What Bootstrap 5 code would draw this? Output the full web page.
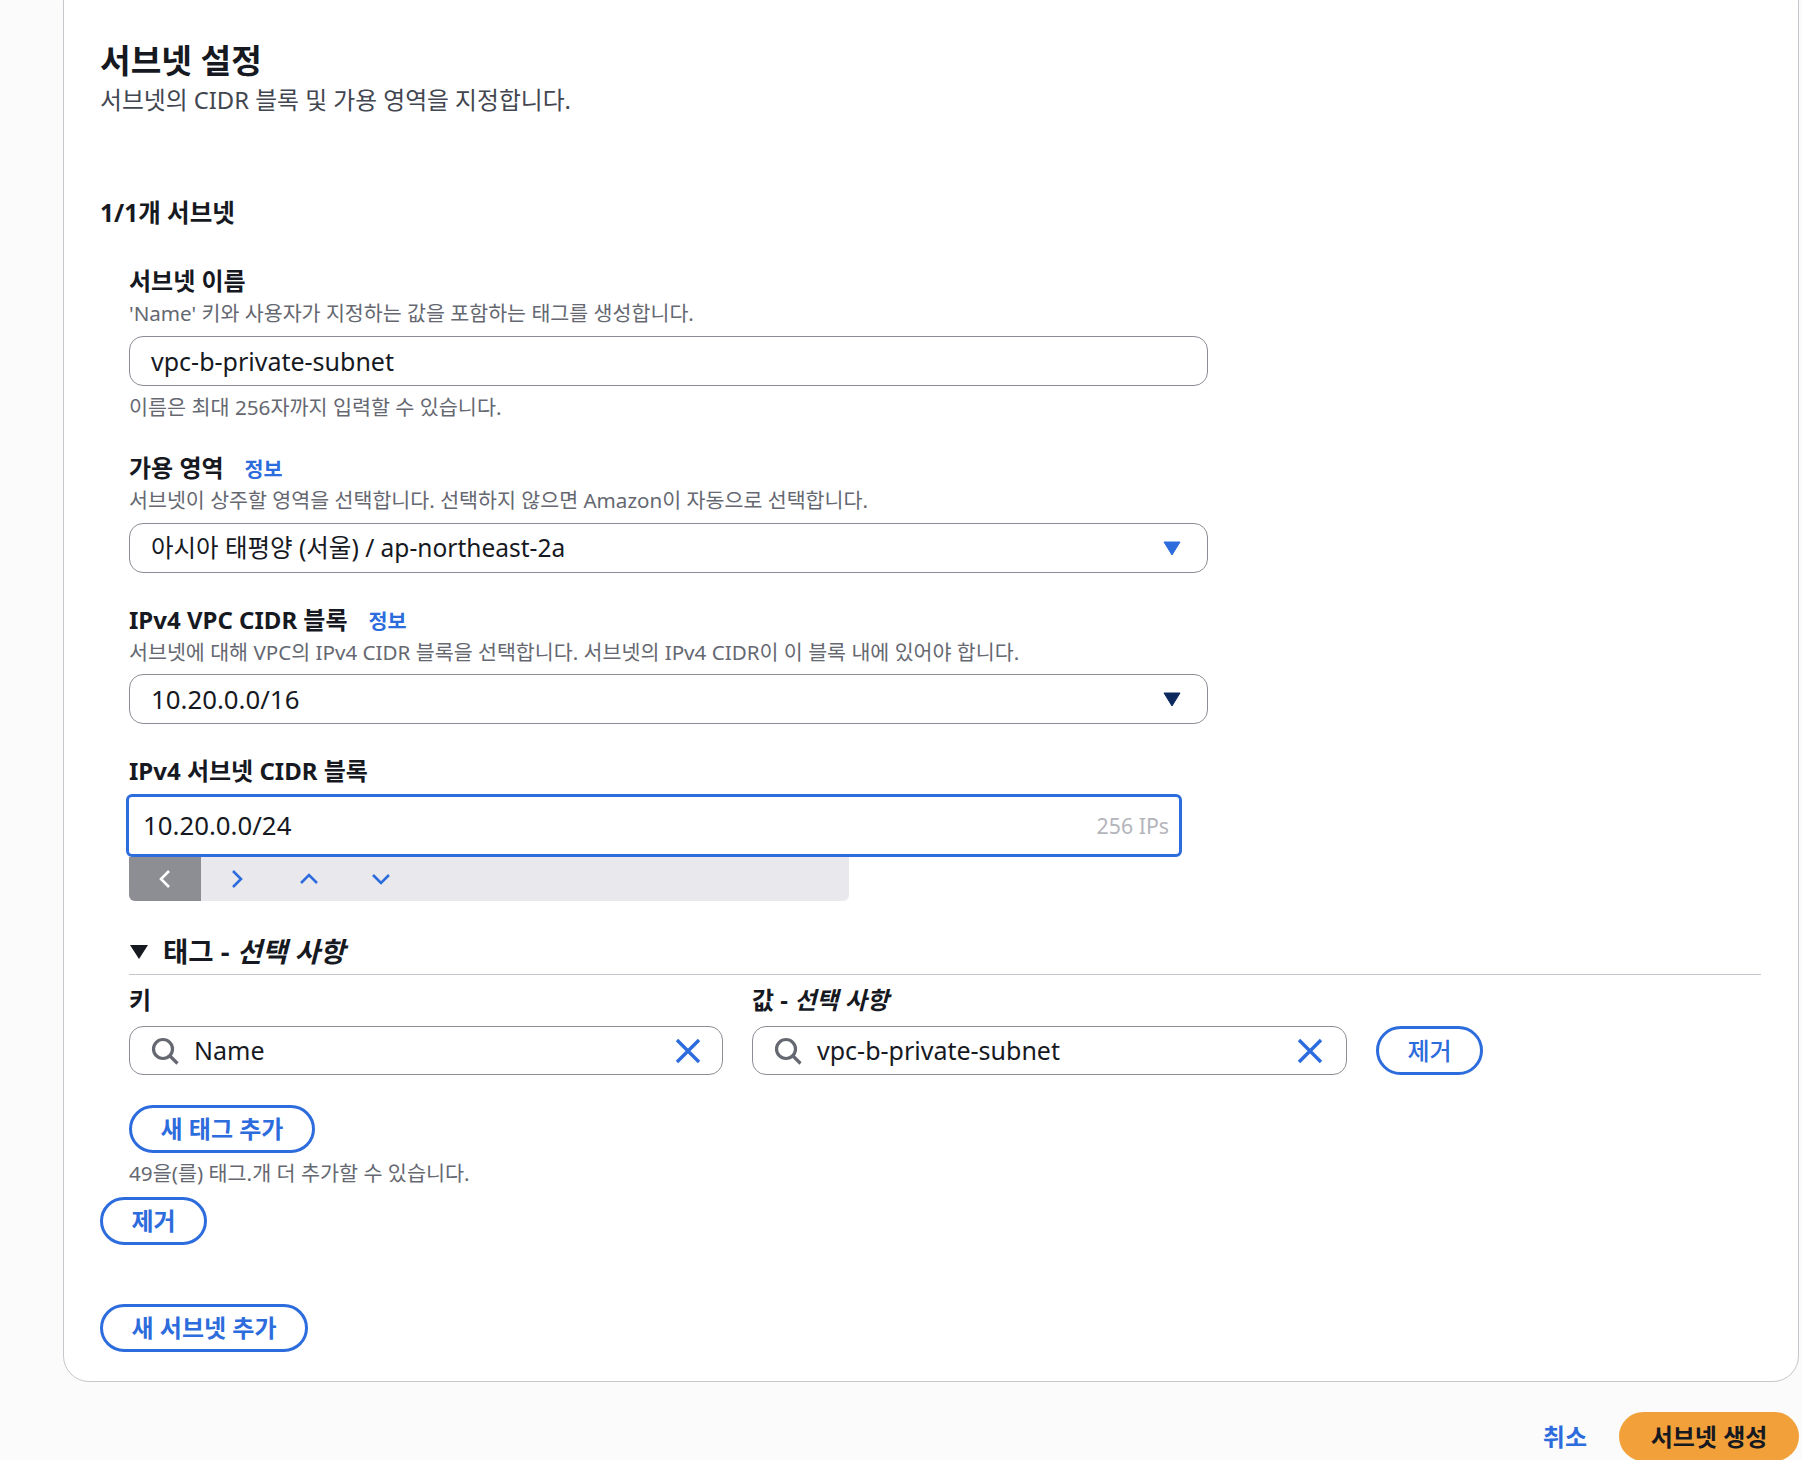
<!DOCTYPE html>
<html lang="ko">
<head>
<meta charset="utf-8">
<title>서브넷 설정</title>
<link href="https://cdn.jsdelivr.net/npm/bootstrap@5.3.0/dist/css/bootstrap.min.css" rel="stylesheet">
<style>
html,body{height:1460px;overflow:hidden}
body{background:#fbfbfb;color:#16191f;font-family:"Noto Sans","Noto Sans CJK KR",sans-serif;font-size:24px}
.page-wrap{margin:-24px 3px 0 63px}
.panel{background:#fff;border:1px solid #c6c6cd;border-radius:26px;padding:61px 37px 29px 36px}
.ttl{font-size:33.3px;line-height:44px;height:44px;font-weight:700;margin:0}
.sub{font-size:23.8px;line-height:36px;height:36px;color:#424650}
.count{font-size:24.5px;line-height:36px;height:36px;font-weight:700;margin:77px 0 34px}
.fld{margin:0 0 31px 29px}
.lbl{font-size:24px;line-height:32px;height:32px;font-weight:700;display:block;margin:0}
.lbl.with-gap{margin-bottom:7px}
.info{color:#2d6cdc;font-size:20.7px;font-weight:700;margin-left:21px}
.hint{font-size:20.6px;line-height:32px;height:32px;color:#656871}
.hint.gap{margin-bottom:7px}
.hint.gap-s{margin-bottom:6px}
.note{font-size:20.7px;line-height:28px;height:28px;color:#656871;margin-top:7px}
.box{height:50px;border:1px solid #8c8c94;border-radius:14px;padding:0 21px;font-size:25px;line-height:48px;background:#fff;overflow:hidden}
.fs-zone{font-size:24.5px}
.fs-num{font-size:25.8px}
.fld-wide{width:1079px}
.caret{width:18px;height:15px;flex:none;margin-right:2px}
.focus-box{margin-left:-3px;width:1056px;height:63px;border:3px solid #2d6cdc;border-radius:6px;padding:0 10px 0 14px;background:#fff;font-size:25.8px}
.ip-count{font-size:21.3px;color:#b4b4bb}
.stepper{width:720px;height:44px;background:#e9e9ed;border-radius:0 0 6px 6px;overflow:hidden}
.stepper span{width:72px;display:flex;align-items:center;justify-content:center}
.stepper span.on{background:#8d8d94}
.tags-head{font-size:27.5px;line-height:32px;height:39px;font-weight:700;padding-bottom:6px;border-bottom:1px solid #c6c6cd;margin-bottom:9px}
.tags-head i{font-weight:700}
.tri{width:20px;height:16px;margin-right:14px}
.col-key{width:594px}
.col-val{width:595px}
.tag-row{gap:29px}
.tag-lbl{font-size:24px;line-height:32px;height:32px;font-weight:700;margin-bottom:10px}
.srch{height:49px;padding:0 21px 0 21px;line-height:47px}
.srch-val{padding-right:23px}
.srch svg.mag{margin-right:15px;flex:none}
.srch svg.clr{flex:none;margin-left:auto}
.pill{display:inline-block;height:48px;padding:0;border:3px solid #2d6cdc;border-radius:25px;color:#2d6cdc;background:#fff;font-size:24px;line-height:42px;font-weight:700;text-align:center}
.pill:hover{color:#2d6cdc;background:#fff;border-color:#2d6cdc}
.w-del{width:107px}
.w-newtag{width:186px}
.w-newsub{width:208px}
.gap-del{width:107px;height:49px;margin-top:42px;font-weight:500}
.foot{margin:30px 0 0 0;gap:32px}
.cancel{color:#2d6cdc;font-size:24px;font-weight:700;text-decoration:none;line-height:32px}
.go{width:180px;height:49px;border:0;border-radius:25px;background:#f2a03a;color:#16191f;font-size:24px;font-weight:700;line-height:49px;padding:0}
.go:hover{background:#f2a03a;color:#16191f}
</style>
</head>
<body>
<div class="page-wrap">
  <div class="panel">
    <h1 class="ttl">서브넷 설정</h1>
    <div class="sub">서브넷의 CIDR 블록 및 가용 영역을 지정합니다.</div>
    <div class="count">1/1개 서브넷</div>

    <div class="fld fld-wide">
      <label class="lbl">서브넷 이름</label>
      <div class="hint gap">'Name' 키와 사용자가 지정하는 값을 포함하는 태그를 생성합니다.</div>
      <div class="box">vpc-b-private-subnet</div>
      <div class="note">이름은 최대 256자까지 입력할 수 있습니다.</div>
    </div>

    <div class="fld fld-wide">
      <label class="lbl">가용 영역<a class="info text-decoration-none" href="#">정보</a></label>
      <div class="hint gap">서브넷이 상주할 영역을 선택합니다. 선택하지 않으면 Amazon이 자동으로 선택합니다.</div>
      <div class="box fs-zone d-flex align-items-center justify-content-between pe-4">
        <span>아시아 태평양 (서울) / ap-northeast-2a</span>
        <svg class="caret" viewBox="0 0 18 15"><path d="M1 1h16L9 14z" fill="#2d6cdc" stroke="#2d6cdc" stroke-linejoin="round"/></svg>
      </div>
    </div>

    <div class="fld fld-wide">
      <label class="lbl">IPv4 VPC CIDR 블록<a class="info text-decoration-none" href="#">정보</a></label>
      <div class="hint gap-s">서브넷에 대해 VPC의 IPv4 CIDR 블록을 선택합니다. 서브넷의 IPv4 CIDR이 이 블록 내에 있어야 합니다.</div>
      <div class="box fs-num d-flex align-items-center justify-content-between pe-4">
        <span>10.20.0.0/16</span>
        <svg class="caret" viewBox="0 0 18 15"><path d="M1 1h16L9 14z" fill="#0d2a5f" stroke="#0d2a5f" stroke-linejoin="round"/></svg>
      </div>
    </div>

    <div class="fld" style="margin-bottom:35px">
      <label class="lbl with-gap">IPv4 서브넷 CIDR 블록</label>
      <div class="focus-box d-flex align-items-center justify-content-between">
        <span>10.20.0.0/24</span><span class="ip-count">256 IPs</span>
      </div>
      <div class="stepper d-flex">
        <span class="on"><svg width="16" height="20" viewBox="0 0 16 20"><path d="M12 2 4 10l8 8" fill="none" stroke="#fff" stroke-width="2.6"/></svg></span>
        <span><svg width="16" height="20" viewBox="0 0 16 20"><path d="m4 2 8 8-8 8" fill="none" stroke="#2d6cdc" stroke-width="2.6"/></svg></span>
        <span><svg width="20" height="16" viewBox="0 0 20 16"><path d="m2 12 8-8 8 8" fill="none" stroke="#2d6cdc" stroke-width="2.6"/></svg></span>
        <span><svg width="20" height="16" viewBox="0 0 20 16"><path d="m2 4 8 8 8-8" fill="none" stroke="#2d6cdc" stroke-width="2.6"/></svg></span>
      </div>
    </div>

    <div style="margin-left:29px">
      <div class="tags-head d-flex align-items-center">
        <svg class="tri" viewBox="0 0 20 16"><path d="M1 1h18L10 15z" fill="#16191f"/></svg>
        <span>태그 - <i>선택 사항</i></span>
      </div>
      <div class="d-flex tag-row">
        <div class="col-key">
          <div class="tag-lbl">키</div>
          <div class="box srch d-flex align-items-center">
            <svg class="mag" width="28" height="28" viewBox="0 0 28 28"><circle cx="12" cy="12" r="9.5" fill="none" stroke="#656871" stroke-width="3.2"/><path d="m18.5 18.5 8 8" stroke="#656871" stroke-width="3.2"/></svg>
            <span>Name</span>
            <svg class="clr" width="26" height="26" viewBox="0 0 26 26"><path d="m2 2 22 22M24 2 2 24" stroke="#2d6cdc" stroke-width="3.4"/></svg>
          </div>
        </div>
        <div class="col-val">
          <div class="tag-lbl">값 - <i>선택 사항</i></div>
          <div class="box srch srch-val d-flex align-items-center">
            <svg class="mag" width="28" height="28" viewBox="0 0 28 28"><circle cx="12" cy="12" r="9.5" fill="none" stroke="#656871" stroke-width="3.2"/><path d="m18.5 18.5 8 8" stroke="#656871" stroke-width="3.2"/></svg>
            <span>vpc-b-private-subnet</span>
            <svg class="clr" width="26" height="26" viewBox="0 0 26 26"><path d="m2 2 22 22M24 2 2 24" stroke="#2d6cdc" stroke-width="3.4"/></svg>
          </div>
        </div>
        <button type="button" class="btn pill gap-del">제거</button>
      </div>
      <button type="button" class="btn pill w-newtag d-block" style="margin-top:30px">새 태그 추가</button>
      <div class="note" style="margin-top:6px">49을(를) 태그.개 더 추가할 수 있습니다.</div>
    </div>

    <button type="button" class="btn pill w-del d-block" style="margin-top:10px">제거</button>
    <button type="button" class="btn pill w-newsub d-block" style="margin-top:59px">새 서브넷 추가</button>
  </div>
  <div class="foot d-flex justify-content-end align-items-center">
    <a class="cancel" href="#">취소</a>
    <button type="button" class="btn go">서브넷 생성</button>
  </div>
</div>
</body>
</html>
